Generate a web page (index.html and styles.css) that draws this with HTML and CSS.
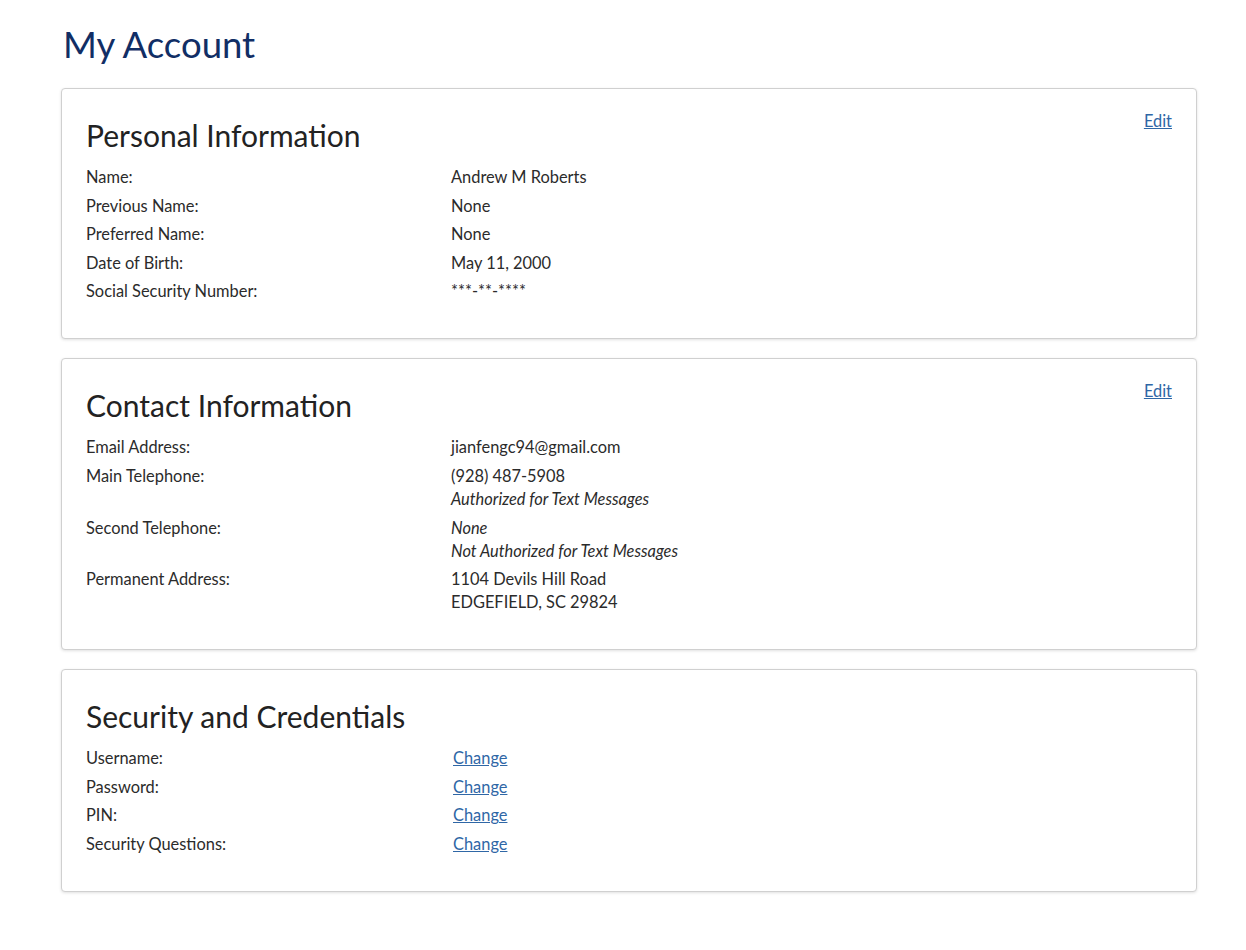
FILE: index.html
```html
<!DOCTYPE html>
<html lang="en">
<head>
<meta charset="utf-8">
<title>My Account</title>
<link rel="stylesheet" href="styles.css">
</head>
<body>
<main class="page">
  <h1 class="page-title">My Account</h1>

  <section class="card">
    <div class="card-head">
      <h2 class="card-title">Personal Information</h2>
      <a class="edit-link" href="#">Edit</a>
    </div>
    <dl class="info">
      <div class="row"><dt>Name:</dt><dd>Andrew M Roberts</dd></div>
      <div class="row"><dt>Previous Name:</dt><dd>None</dd></div>
      <div class="row"><dt>Preferred Name:</dt><dd>None</dd></div>
      <div class="row"><dt>Date of Birth:</dt><dd>May 11, 2000</dd></div>
      <div class="row"><dt>Social Security Number:</dt><dd>***-**-****</dd></div>
    </dl>
  </section>

  <section class="card">
    <div class="card-head">
      <h2 class="card-title">Contact Information</h2>
      <a class="edit-link" href="#">Edit</a>
    </div>
    <dl class="info">
      <div class="row"><dt>Email Address:</dt><dd>jianfengc94@gmail.com</dd></div>
      <div class="row"><dt>Main Telephone:</dt><dd>(928) 487-5908<br><em>Authorized for Text Messages</em></dd></div>
      <div class="row"><dt>Second Telephone:</dt><dd><em>None</em><br><em>Not Authorized for Text Messages</em></dd></div>
      <div class="row"><dt>Permanent Address:</dt><dd>1104 Devils Hill Road<br>EDGEFIELD, SC 29824</dd></div>
    </dl>
  </section>

  <section class="card">
    <div class="card-head">
      <h2 class="card-title">Security and Credentials</h2>
    </div>
    <dl class="info">
      <div class="row"><dt>Username:</dt><dd><a class="change-link" href="#">Change</a></dd></div>
      <div class="row"><dt>Password:</dt><dd><a class="change-link" href="#">Change</a></dd></div>
      <div class="row"><dt>PIN:</dt><dd><a class="change-link" href="#">Change</a></dd></div>
      <div class="row"><dt>Security Questions:</dt><dd><a class="change-link" href="#">Change</a></dd></div>
    </dl>
  </section>
</main>
</body>
</html>
```

FILE: styles.css
```css
html, body {
  margin: 0;
  padding: 0;
  background: #ffffff;
}

body {
  font-family: "Lato", "Open Sans", "Liberation Sans", sans-serif;
  color: #2b2b2b;
  font-size: 16.4px;
}

.page {
  width: 1136px;
  margin: 0 0 0 61px;
  padding: 21px 0 40px;
  display: flex;
  flex-direction: column;
  gap: 19px;
}

.page-title {
  margin: 0 0 2px 2px;
  font-size: 36.5px;
  font-weight: 400;
  line-height: 46px;
  color: #112e65;
}

.card {
  border: 1px solid #d0d0d0;
  border-radius: 4px;
  box-shadow: 0 1px 3px rgba(0, 0, 0, 0.12);
  padding: 22px 24px 36px;
  background: #fff;
}

.card-head {
  display: flex;
  justify-content: space-between;
  align-items: flex-start;
}

.card-title {
  margin: 6px 0 12px;
  font-size: 30px;
  font-weight: 400;
  line-height: 36px;
  color: #222;
}

.edit-link,
.change-link {
  color: #2f67a6;
  text-decoration: underline;
  line-height: 23px;
}

.edit-link {
  margin-top: -2px;
}

.change-link {
  margin-left: 2px;
}

.info {
  margin: 0;
  display: flex;
  flex-direction: column;
  gap: 5.6px;
}

.row {
  display: grid;
  grid-template-columns: 365px 1fr;
  line-height: 23px;
}

dt, dd {
  margin: 0;
}

dd em {
  font-style: italic;
}
```
